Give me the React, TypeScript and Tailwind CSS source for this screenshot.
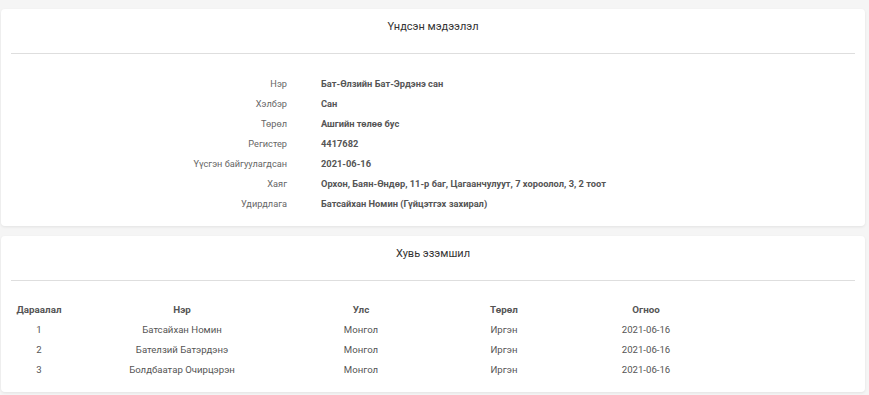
import React from "react";

const info: [string, string][] = [
  ["Нэр", "Бат-Өлзийн Бат-Эрдэнэ сан"],
  ["Хэлбэр", "Сан"],
  ["Төрөл", "Ашгийн төлөө бус"],
  ["Регистер", "4417682"],
  ["Үүсгэн байгуулагдсан", "2021-06-16"],
  ["Хаяг", "Орхон, Баян-Өндөр, 11-р баг, Цагаанчулуут, 7 хороолол, 3, 2 тоот"],
  ["Удирдлага", "Батсайхан Номин (Гүйцэтгэх захирал)"],
];

const rows: [string, string, string, string, string][] = [
  ["1", "Батсайхан Номин", "Монгол", "Иргэн", "2021-06-16"],
  ["2", "Бателзий Батэрдэнэ", "Монгол", "Иргэн", "2021-06-16"],
  ["3", "Болдбаатар Очирцэрэн", "Монгол", "Иргэн", "2021-06-16"],
];

const cols = ["w-[56px]", "w-[230px]", "w-[128px]", "w-[158px]", "w-[126px]"];
const heads = ["Дараалал", "Нэр", "Улс", "Төрөл", "Огноо"];

export default function App() {
  return (
    <div
      className="w-[869px] h-[395px] bg-[#f5f5f5] pt-[9px] pl-[1px] overflow-hidden"
      style={{ fontFamily: "Roboto, 'Liberation Sans', sans-serif" }}
    >
      <div className="w-[864px] bg-white rounded-[4px] shadow-[0_1px_3px_rgba(0,0,0,0.08)] px-[10px] pb-[12px]">
        <div className="h-[44px] pt-[10px] text-center text-[11px] text-[#333] leading-[16px]">
          Үндсэн мэдээлэл
        </div>
        <div className="h-px bg-[#dedede]" />
        <div className="pt-[20px] flex flex-col">
          {info.map(([l, v]) => (
            <div key={l} className="flex h-[20px] items-center">
              <div className="w-[276px] text-right text-[#666] text-[9.2px]">{l}</div>
              <div className="pl-[34px] font-bold text-[#555] text-[9.3px]">{v}</div>
            </div>
          ))}
        </div>
      </div>
      <div className="mt-[10px] w-[864px] bg-white rounded-[4px] shadow-[0_1px_3px_rgba(0,0,0,0.08)] px-[10px] pb-[12px]">
        <div className="h-[44px] pt-[10px] text-center text-[11px] text-[#333] leading-[16px]">
          Хувь эзэмшил
        </div>
        <div className="h-px bg-[#dedede]" />
        <div className="pt-[19px] text-[#555]">
          <div className="flex h-[20px] items-center font-bold text-[9.8px]">
            {heads.map((h, i) => (
              <div key={h} className={`${cols[i]} text-center`}>
                {h}
              </div>
            ))}
          </div>
          {rows.map((r) => (
            <div key={r[0]} className="flex h-[20px] items-center text-[9.6px]">
              {r.map((c, i) => (
                <div key={i} className={`${cols[i]} text-center`}>
                  {c}
                </div>
              ))}
            </div>
          ))}
        </div>
      </div>
    </div>
  );
}
